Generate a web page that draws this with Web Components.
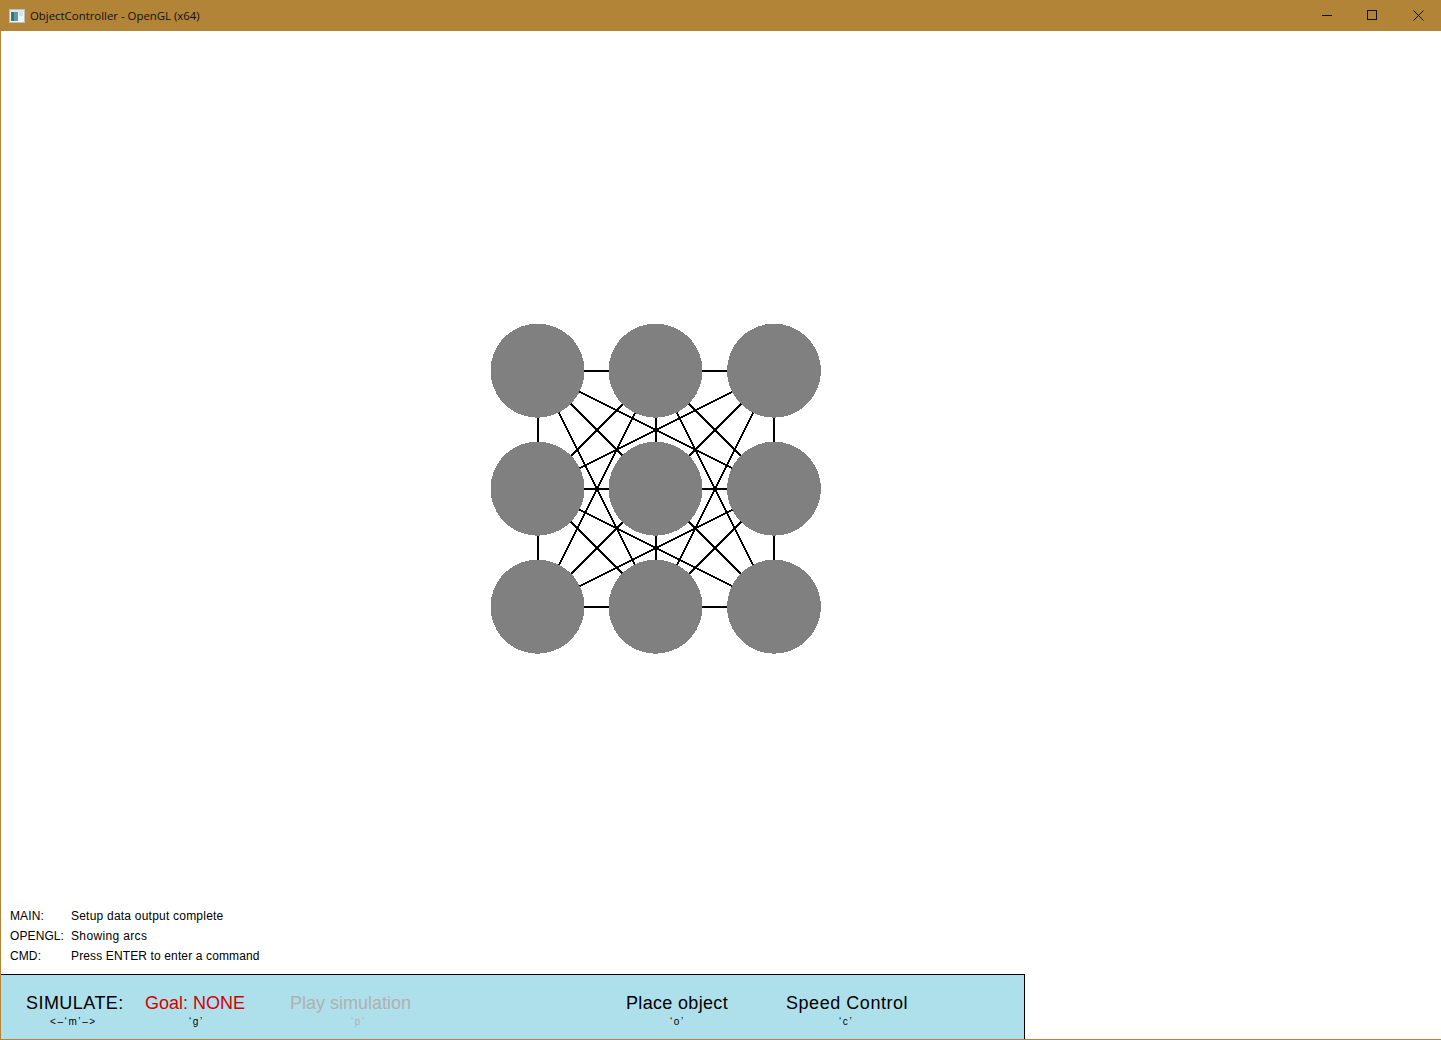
<!DOCTYPE html>
<html><head><meta charset="utf-8"><style>
html,body{margin:0;height:100%;overflow:hidden;background:#fff}
</style></head><body>
<app-window title-text="ObjectController - OpenGL (x64)">
  <arc-graph></arc-graph>
  <log-row slot="log" tag="MAIN:" msg="Setup data output complete" style="--ls:.22px"></log-row>
  <log-row slot="log" tag="OPENGL:" msg="Showing arcs" style="--ls:.35px"></log-row>
  <log-row slot="log" tag="CMD:" msg="Press ENTER to enter a command" style="--ls:.13px"></log-row>
  <menu-item slot="menu" label="SIMULATE:" hint="<–‘m’–>" style="--w:119px;--hint-x:24px;--ls:.45px"></menu-item>
  <menu-item slot="menu" label="Goal: NONE" hint="‘g’" style="--w:145px;--hint-x:44px;--c:#d40000;--hc:#000"></menu-item>
  <menu-item slot="menu" label="Play simulation" hint="‘p’" style="--w:336px;--hint-x:61px;--c:#b0b0b0;--hc:#b0b0b0"></menu-item>
  <menu-item slot="menu" label="Place object" hint="‘o’" style="--w:160px;--hint-x:44px;--ls:.33px"></menu-item>
  <menu-item slot="menu" label="Speed Control" hint="‘c’" style="--w:160px;--hint-x:53px;--ls:.54px"></menu-item>
</app-window>
<script>
class AppWindow extends HTMLElement{constructor(){super();const s=this.attachShadow({mode:'open'});
s.innerHTML=`<style>
:host{display:flex;flex-direction:column;width:1441px;height:1040px;box-sizing:border-box;border-left:1px solid #b28438;border-bottom:1px solid #b28438;background:#fff}
.bar{height:31px;margin-left:-1px;background:#b28438;display:flex;align-items:center;flex:none}
.ic{margin-left:9px;width:16px;height:14px;margin-right:5px;flex:none}
.t{font:11.4px "Open Sans","Noto Sans",sans-serif;color:#111;flex:1;white-space:nowrap}
.b{width:45px;height:31px;box-sizing:border-box;display:flex;align-items:center;justify-content:center}
.s{padding-right:2px}
main{flex:1;display:flex;flex-direction:column;min-height:0}
.canvas{flex:1;min-height:0;padding:292px 0 0 488px;box-sizing:border-box}
.log{padding:0 0 8px 9px;flex:none}
.menu{flex:none;width:1024px;height:65px;box-sizing:border-box;border-top:1px solid #000;border-right:1px solid #000;background:#aee0ec;display:flex;padding:0 0 0 25px}
</style>
<div class="bar">
<svg class="ic" viewBox="0 0 16 14" shape-rendering="crispEdges"><rect x=".5" y=".5" width="15" height="13" fill="#f0f4f4" stroke="#b9c2c2"/><rect x="1" y="1" width="14" height="2" fill="#dfe6e8"/><rect x="2" y="3" width="7" height="9" fill="#5f9aa0"/><rect x="2" y="3" width="3" height="9" fill="#3a7286"/><rect x="10" y="3" width="4" height="4" fill="#cfe2e8"/></svg>
<span class="t"></span>
<span class="b s"><svg width="11" height="11" shape-rendering="crispEdges"><rect x="0" y="5" width="10" height="1" fill="#111"/></svg></span>
<span class="b s"><svg width="11" height="11" shape-rendering="crispEdges"><rect x=".5" y=".5" width="9" height="9" fill="none" stroke="#111"/></svg></span>
<span class="b"><svg width="11" height="11"><path d="M.5.5l10 10M10.5.5l-10 10" stroke="#111" fill="none"/></svg></span>
</div>
<main><div class="canvas"><slot></slot></div><div class="log"><slot name="log"></slot></div><div class="menu"><slot name="menu"></slot></div></main>`;
s.querySelector('.t').textContent=this.getAttribute('title-text');}}
class LogRow extends HTMLElement{constructor(){super();const s=this.attachShadow({mode:'open'});
s.innerHTML=`<style>:host{display:flex;height:20px;align-items:center;font:12px "Liberation Sans",Arial,sans-serif;color:#000;white-space:nowrap}
b{font-weight:400;width:61px;flex:none;letter-spacing:.1px}span{letter-spacing:var(--ls,0)}</style><b></b><span></span>`;
s.querySelector('b').textContent=this.getAttribute('tag');s.querySelector('span').textContent=this.getAttribute('msg');}}
class MenuItem extends HTMLElement{constructor(){super();const s=this.attachShadow({mode:'open'});
s.innerHTML=`<style>:host{display:block;flex:none;width:var(--w);padding-top:17px;white-space:nowrap;font-family:"Liberation Sans",Arial,sans-serif}
.l{font-size:18px;line-height:22px;color:var(--c,#000);letter-spacing:var(--ls,0)}
.h{font-size:10px;line-height:12px;margin-top:2px;letter-spacing:1.6px;padding-left:var(--hint-x);color:var(--hc,#000)}</style><div class="l"></div><div class="h"></div>`;
s.querySelector('.l').textContent=this.getAttribute('label');s.querySelector('.h').textContent=this.getAttribute('hint');}}
class ArcGraph extends HTMLElement{constructor(){super();const s=this.attachShadow({mode:'open'});
const idx=[0,118,236],cx=[48.5,166.5,285];const L=[],C=[];idx.forEach(y=>idx.forEach((x,n)=>{L.push([49+x,48+y]);C.push([cx[n],47.7+y]);}));
let l='';for(let i=0;i<9;i++)for(let j=i+1;j<9;j++){const dx=Math.abs(L[j][0]-L[i][0]),dy=Math.abs(L[j][1]-L[i][1]);const w=dx&&dy&&dx===dy?1.7:2;l+=`<line stroke-width="${w}" x1="${L[i][0]}" y1="${L[i][1]}" x2="${L[j][0]}" y2="${L[j][1]}"/>`;}
const N=36;const c=C.map(([x,y])=>{let p=[];for(let k=0;k<N;k++){const a=k*2*Math.PI/N;p.push((x+47*Math.cos(a)).toFixed(2)+','+(y+47*Math.sin(a)).toFixed(2));}return `<polygon points="${p.join(' ')}"/>`}).join('');
s.innerHTML=`<style>:host{display:block;width:334px;height:333px}svg{display:block}</style>
<svg width="334" height="333" shape-rendering="crispEdges"><g stroke="#000">${l}</g><g fill="#808080">${c}</g></svg>`;}}
customElements.define('app-window',AppWindow);customElements.define('log-row',LogRow);customElements.define('menu-item',MenuItem);customElements.define('arc-graph',ArcGraph);
</script></body></html>
